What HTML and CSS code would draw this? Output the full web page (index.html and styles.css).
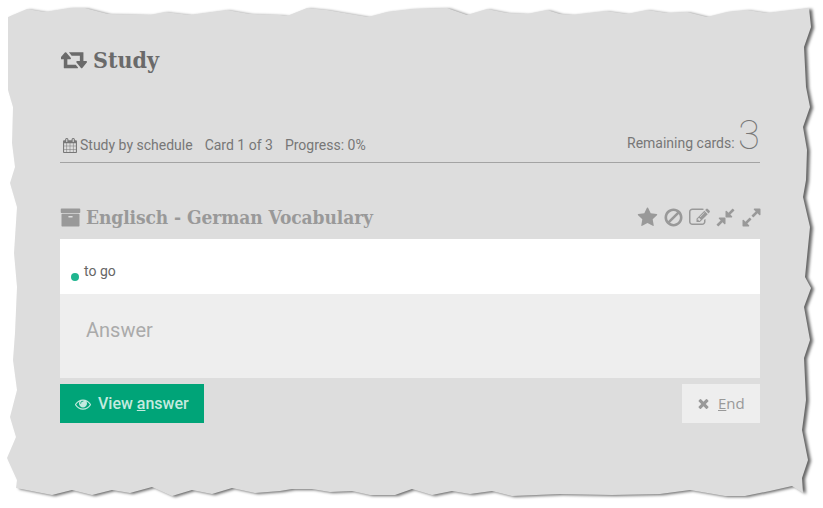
FILE: index.html
```html
<!DOCTYPE html>
<html>
  <head>
    <meta charset="UTF-8">
    <title>Study</title>
    <link rel="stylesheet" href="styles.css">
  </head>
  <body>
    <div class="paper">
      <svg class="torn-edge" viewBox="0 0 823 508" width="823" height="508">
        <polygon points="8,17 27,9 45,12 70,8 85,8 108,14 150,15 165,12 190,15 227,10 250,14 280,15 287,16 307,8 327,10 368,17 387,12 413,9 447,8 467,15 487,9 507,13 527,14 547,10 560,14 572,15 606,11 627,14 647,10 667,13 687,12 707,17 727,12 747,10 767,13 809,8 811,27 804,47 806,87 810,107 803,127 807,150 806,180 803,197 810,227 806,267 805,277 811,288 804,307 810,340 804,358 806,400 802,430 808,460 802,478 803,493 792,486 770,491 745,496 725,496 690,490 660,494 612,495 560,494 512,496 492,491 470,494 452,491 432,495 412,489 395,495 370,495 352,491 330,492 312,489 292,489 280,491 255,493 232,488 212,494 192,490 172,496 152,487 130,493 112,490 92,495 72,490 52,495 16,488 17,480 7,458 16,437 10,417 17,390 13,360 15,333 17,287 14,253 17,207 10,183 15,167 12,143 13,107 8,90"></polygon>
      </svg>
      <div class="content">
        <h1 class="page-title">
          <svg class="icon icon-retweet" viewBox="0 0 1920 1792"><path d="M1216 1488q0 13-9.5 22.5t-22.5 9.5h-960q-8 0-13.5-2t-9-7-5.5-8-3-11.5-1-11.5v-600h-192q-26 0-45-19t-19-45q0-24 15-41l320-384q19-22 49-22t49 22l320 384q15 17 15 41 0 26-19 45t-45 19h-192v384h576q16 0 25 11l160 192q7 10 7 21zm640-416q0 24-15 41l-320 384q-20 23-49 23t-49-23l-320-384q-15-17-15-41 0-26 19-45t45-19h192v-384h-576q-16 0-25-12l-160-192q-7-9-7-20 0-13 9.5-22.5t22.5-9.5h960q8 0 13.5 2t9 7 5.5 8 3 11.5 1 11.5v600h192q26 0 45 19t19 45z"/></svg>
          <span>Study</span>
        </h1>

        <div class="status-row">
          <div class="status-left">
            <span class="status-item">
              <svg class="icon icon-calendar" viewBox="0 0 1664 1792"><path d="M128 1664h288v-288h-288v288zm352 0h320v-288h-320v288zm-352-352h288v-320h-288v320zm352 0h320v-320h-320v320zm-352-384h288v-288h-288v288zm736 736h320v-288h-320v288zm-384-736h320v-288h-320v288zm768 736h288v-288h-288v288zm-384-352h320v-320h-320v320zm-352-864v-288q0-13-9.5-22.5t-22.5-9.5h-64q-13 0-22.5 9.5t-9.5 22.5v288q0 13 9.5 22.5t22.5 9.5h64q13 0 22.5-9.5t9.5-22.5zm736 864h288v-320h-288v320zm-384-384h320v-288h-320v288zm384 0h288v-288h-288v288zm32-480v-288q0-13-9.5-22.5t-22.5-9.5h-64q-13 0-22.5 9.5t-9.5 22.5v288q0 13 9.5 22.5t22.5 9.5h64q13 0 22.5-9.5t9.5-22.5zm384-64v1280q0 52-38 90t-90 38h-1408q-52 0-90-38t-38-90v-1280q0-52 38-90t90-38h128v-96q0-66 47-113t113-47h64q66 0 113 47t47 113v96h384v-96q0-66 47-113t113-47h64q66 0 113 47t47 113v96h128q52 0 90 38t38 90z"/></svg>
              Study by schedule
            </span>
            <span class="status-item">Card 1 of 3</span>
            <span class="status-item">Progress: 0%</span>
          </div>
          <div class="remaining">Remaining cards: <span class="remaining-count">3</span></div>
        </div>

        <div class="card-head">
          <h2 class="card-title">
            <svg class="icon icon-archive" viewBox="0 0 1792 1792"><path d="M1088 832q0-26-19-45t-45-19h-256q-26 0-45 19t-19 45 19 45 45 19h256q26 0 45-19t19-45zm576-192v960q0 26-19 45t-45 19h-1408q-26 0-45-19t-19-45v-960q0-26 19-45t45-19h1408q26 0 45 19t19 45zm64-448v256q0 26-19 45t-45 19h-1536q-26 0-45-19t-19-45v-256q0-26 19-45t45-19h1536q26 0 45 19t19 45z"/></svg>
            <span>Englisch - German Vocabulary</span>
          </h2>
          <div class="card-tools">
            <svg class="icon tool" viewBox="0 0 1792 1792"><path d="M1728 647q0 22-26 48l-363 354 86 500q1 7 1 20 0 21-10.5 35.5t-30.5 14.5q-19 0-40-12l-449-236-449 236q-22 12-40 12-21 0-31.5-14.5t-10.5-35.5q0-6 2-20l86-500-364-354q-25-27-25-48 0-37 56-46l502-73 225-455q19-41 49-41t49 41l225 455 502 73q56 9 56 46z"/></svg>
            <svg class="icon tool" viewBox="0 0 1792 1792"><path d="M1440 893q0-161-87-295l-754 753q137 89 297 89 111 0 211.5-43.5t173.5-116.5 116-174.5 43-212.5zm-999 299l755-754q-135-91-300-91-148 0-273 73t-198 199-73 274q0 162 89 299zm1223-299q0 157-61 300t-163.5 246-245 164-298.5 61-298.5-61-245-164-163.5-246-61-300 61-299.5 163.5-245.5 245-164 298.5-61 298.5 61 245 164 163.5 245.5 61 299.5z"/></svg>
            <svg class="icon tool" viewBox="0 0 1792 1792"><path d="M888 1184l116-116-152-152-116 116v56h96v96h56zm440-720q-16-16-33 1l-350 350q-17 17-1 33t33-1l350-350q17-17 1-33zm80 594v190q0 119-84.5 203.5t-203.5 84.5h-832q-119 0-203.5-84.5t-84.5-203.5v-832q0-119 84.5-203.5t203.5-84.5h832q63 0 117 25 15 7 18 23 3 17-9 29l-49 49q-14 14-32 8-23-6-45-6h-832q-66 0-113 47t-47 113v832q0 66 47 113t113 47h832q66 0 113-47t47-113v-126q0-13 9-22l64-64q15-15 35-7t20 29zm-96-738l288 288-672 672h-288v-288zm444 132l-92 92-288-288 92-92q28-28 68-28t68 28l152 152q28 28 28 68t-28 68z"/></svg>
            <svg class="icon tool" viewBox="0 0 1792 1792"><path d="M896 960v448q0 26-19 45t-45 19-45-19l-144-144-332 332q-10 10-23 10t-23-10l-114-114q-10-10-10-23t10-23l332-332-144-144q-19-19-19-45t19-45 45-19h448q26 0 45 19t19 45zm755-672q0 13-10 23l-332 332 144 144q19 19 19 45t-19 45-45 19h-448q-26 0-45-19t-19-45v-448q0-26 19-45t45-19 45 19l144 144 332-332q10-10 23-10t23 10l114 114q10 10 10 23z"/></svg>
            <svg class="icon tool" viewBox="0 0 1792 1792"><path d="M883 1056q0 13-10 23l-332 332 144 144q19 19 19 45t-19 45-45 19h-448q-26 0-45-19t-19-45v-448q0-26 19-45t45-19 45 19l144 144 332-332q10-10 23-10t23 10l114 114q10 10 10 23zm781-864v448q0 26-19 45t-45 19-45-19l-144-144-332 332q-10 10-23 10t-23-10l-114-114q-10-10-10-23t10-23l332-332-144-144q-19-19-19-45t19-45 45-19h448q26 0 45 19t19 45z"/></svg>
          </div>
        </div>

        <div class="question">
          <span class="dot"></span>
          <span class="question-text">to go</span>
        </div>
        <div class="answer">Answer</div>

        <div class="actions">
          <button class="button button-green" type="button">
            <svg class="icon icon-eye" viewBox="0 0 1792 1792"><path d="M1664 960q-152-236-381-353 61 104 61 225 0 185-131.5 316.5t-316.5 131.5-316.5-131.5-131.5-316.5q0-121 61-225-229 117-381 353 133 205 333.5 326.5t434.5 121.5 434.5-121.5 333.5-326.5zm-720-384q0-20-14-34t-34-14q-125 0-214.5 89.5t-89.5 214.5q0 20 14 34t34 14 34-14 14-34q0-86 61-147t147-61q20 0 34-14t14-34zm848 384q0 34-20 69-140 230-376.5 368.5t-499.5 138.5-499.5-139-376.5-368q-20-35-20-69t20-69q140-229 376.5-368t499.5-139 499.5 139 376.5 368q20 35 20 69z"/></svg>
            <span>View <u>a</u>nswer</span>
          </button>
          <button class="button button-light" type="button">
            <svg class="icon icon-times" viewBox="0 0 1792 1792"><path d="M1490 1322q0 40-28 68l-136 136q-28 28-68 28t-68-28l-294-294-294 294q-28 28-68 28t-68-28l-136-136q-28-28-28-68t28-68l294-294-294-294q-28-28-28-68t28-68l136-136q28-28 68-28t68 28l294 294 294-294q28-28 68-28t68 28l136 136q28 28 28 68t-28 68l-294 294 294 294q28 28 28 68z"/></svg>
            <span class="end-label"><u>E</u>nd</span>
          </button>
        </div>
      </div>
    </div>
  </body>
</html>
```

FILE: styles.css
```css
body {
  margin: 0;
  background-color: #fff;
  font-family: 'Roboto', sans-serif;
  color: #777;
}

.paper {
  position: relative;
  width: 823px;
  height: 508px;
  overflow: hidden;
}

/* the torn paper shape sits behind everything */
.torn-edge {
  position: absolute;
  left: 0;
  top: 0;
}
.torn-edge polygon {
  fill: #ddd;
  filter: drop-shadow(3px 1px 1.5px rgba(0, 0, 0, 0.6));
}

.content {
  position: relative;
  width: 700px;
  padding: 43px 0 0 60px;
}

.icon {
  fill: currentColor;
  display: block;
  flex: none;
}

.page-title {
  display: flex;
  align-items: center;
  gap: 5px;
  height: 32px;
  margin: 0;
  font-family: 'DejaVu Serif Condensed', 'DejaVu Serif', serif;
  font-size: 23px;
  font-weight: 700;
  color: #6a6a6a;
}
.icon-retweet {
  width: 27px;
  height: 25px;
  margin-left: 1px;
}

.status-row {
  display: flex;
  justify-content: space-between;
  align-items: flex-end;
  height: 71px;
  padding-bottom: 7px;
  margin-top: 9px;
  border-bottom: 1px solid #a3a3a3;
  font-size: 14px;
  box-sizing: content-box;
}
.status-left {
  display: flex;
  gap: 12px;
  line-height: 20px;
  margin-left: 3px;
}
.status-item {
  display: flex;
  align-items: center;
  gap: 3px;
}
.icon-calendar {
  width: 14px;
  height: 15px;
}
.remaining {
  line-height: 20px;
  margin-bottom: 2px;
}
.remaining-count {
  font-size: 40px;
  font-weight: 100;
  line-height: 20px;
  vertical-align: -1px;
}

.card-head {
  display: flex;
  justify-content: space-between;
  align-items: center;
  height: 30px;
  margin-top: 39px;
  margin-bottom: 7px;
  color: #999;
}
.card-title {
  display: flex;
  align-items: center;
  gap: 5px;
  margin: 0;
  font-family: 'DejaVu Serif Condensed', 'DejaVu Serif', serif;
  font-size: 19px;
  font-weight: 700;
  letter-spacing: -0.08px;
}
.icon-archive {
  width: 21px;
  height: 21px;
}
.card-tools {
  display: flex;
  gap: 5px;
  margin-right: -2px;
}
.tool {
  width: 21px;
  height: 21px;
}

.question {
  display: flex;
  height: 55px;
  background-color: #fff;
  font-size: 14px;
  color: #666;
}
.dot {
  width: 8px;
  height: 8px;
  margin: 34px 0 0 11px;
  border-radius: 50%;
  background-color: #1fb58f;
}
.question-text {
  margin: 24px 0 0 5px;
  line-height: 17px;
}

.answer {
  height: 84px;
  padding: 24px 0 0 26px;
  box-sizing: border-box;
  background-color: #eee;
  font-size: 20px;
  line-height: 24px;
  color: #aaa;
}

.actions {
  display: flex;
  justify-content: space-between;
  margin-top: 6px;
}
.button {
  display: flex;
  align-items: center;
  height: 39px;
  border: none;
  font-family: 'Roboto', sans-serif;
  font-size: 16px;
  font-weight: 500;
}
.button-green {
  width: 144px;
  padding: 0 0 0 15px;
  gap: 7px;
  background-color: #00a478;
  color: #c4eadf;
}
.button-light {
  width: 78px;
  padding: 0 0 0 14px;
  gap: 7px;
  background-color: #eee;
  color: #999;
  font-family: 'Open Sans', sans-serif;
  font-size: 15px;
  font-weight: 400;
}
.end-label {
  margin-bottom: 2px;
}
.icon-eye {
  width: 16px;
  height: 16px;
}
.icon-times {
  width: 15px;
  height: 15px;
}
```
